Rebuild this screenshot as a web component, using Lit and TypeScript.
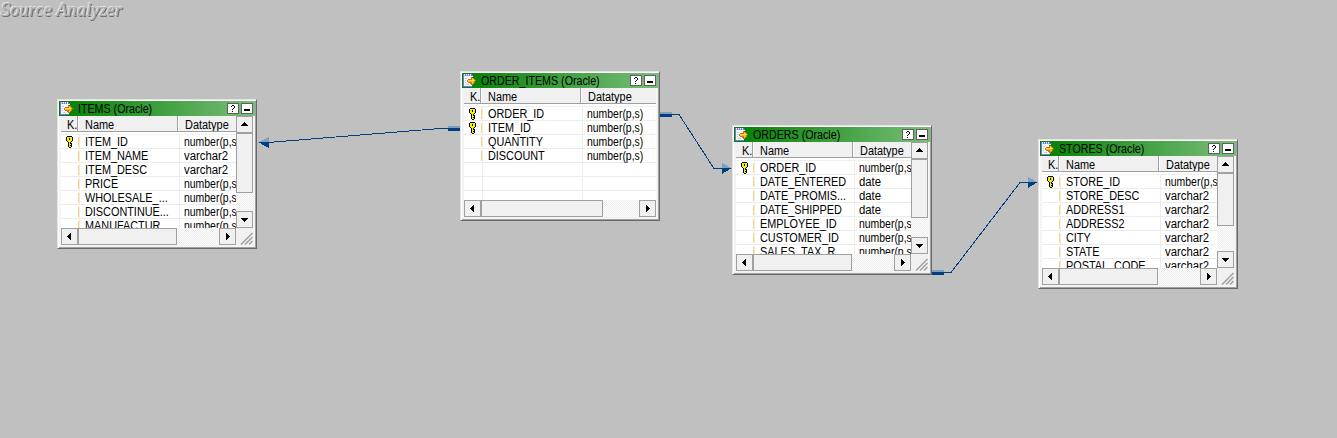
import { LitElement, html, css, svg, nothing } from "lit";
import { customElement, property } from "lit/decorators.js";
import { styleMap } from "lit/directives/style-map.js";

interface Column { name: string; type: string; key?: boolean; }
interface Table { title: string; x: number; y: number; thumb: number; columns: Column[]; }

const num = "number(p,s)";
const vc = "varchar2";

const tables: Table[] = [
  { title: "ITEMS (Oracle)", x: 57, y: 99, thumb: 60, columns: [
    { name: "ITEM_ID", type: num, key: true }, { name: "ITEM_NAME", type: vc }, { name: "ITEM_DESC", type: vc },
    { name: "PRICE", type: num }, { name: "WHOLESALE_...", type: num }, { name: "DISCONTINUE...", type: num },
    { name: "MANUFACTUR...", type: num } ] },
  { title: "ORDER_ITEMS (Oracle)", x: 460, y: 71, thumb: 0, columns: [
    { name: "ORDER_ID", type: num, key: true }, { name: "ITEM_ID", type: num, key: true },
    { name: "QUANTITY", type: num }, { name: "DISCOUNT", type: num },
    { name: "", type: "" }, { name: "", type: "" }, { name: "", type: "" } ] },
  { title: "ORDERS (Oracle)", x: 732, y: 125, thumb: 59, columns: [
    { name: "ORDER_ID", type: num, key: true }, { name: "DATE_ENTERED", type: "date" },
    { name: "DATE_PROMIS...", type: "date" }, { name: "DATE_SHIPPED", type: "date" },
    { name: "EMPLOYEE_ID", type: num }, { name: "CUSTOMER_ID", type: num }, { name: "SALES_TAX_R...", type: num } ] },
  { title: "STORES (Oracle)", x: 1038, y: 139, thumb: 53, columns: [
    { name: "STORE_ID", type: num, key: true }, { name: "STORE_DESC", type: vc }, { name: "ADDRESS1", type: vc },
    { name: "ADDRESS2", type: vc }, { name: "CITY", type: vc }, { name: "STATE", type: vc },
    { name: "POSTAL_CODE", type: vc } ] },
];

const colours: Record<string, string> = {
  k: "#000", y: "#f8f000", w: "#fff", o: "#808000",
  p: "#7474e4", l: "#c4c4f8", f: "#f4f4ff", b: "#c07810", g: "#ffb818", h: "#ffe050",
};

function pixels(rows: string[], name: string) {
  return html`<svg class=${name} width=${rows[0].length} height=${rows.length} shape-rendering="crispEdges">
    ${rows.map((row, y) => [...row].map((c, x) => c === "." ? nothing
      : svg`<rect x=${x} y=${y} width="1" height="1" fill=${colours[c]}></rect>`))}
  </svg>`;
}

const keyIcon = pixels([
  ".kkkkk.", "kyyyyyk", "kyykyyk", "kyykyyk", "kyyyyyk", ".kyyyk.", "..kyk..",
  "..kykk.", "..kyyk.", "..kykk.", "..kyyk.", "...kk..",
], "key");

const sourceIcon = pixels([
  "pfpfpfpfp....",
  "plplplplpp...",
  "pfffffffff...",
  "pfffffffb....",
  "pfllffffbgb..",
  "pffffbbbbhgb.",
  "pflfbhhhhhhgb",
  "pfffbggggggb.",
  "pflffbbbbggb.",
  "pffffffpbgb..",
  "pfflllffbb...",
  "pffffffff....",
  "ppppppppp....",
], "source");

@customElement("source-table")
export class SourceTable extends LitElement {
  @property({ attribute: false }) table!: Table;

  static styles = css`
    :host { display: block; }
    * { box-sizing: border-box; }
    .window {
      width: 200px; height: 150px; padding: 0 1px 1px 1px; background: #f4f4f4; overflow: hidden;
      border: 1px solid; border-color: #e3e3e3 #696969 #696969 #e3e3e3;
      box-shadow: inset 1px 1px #fff, inset -1px -1px #a0a0a0;
      font: 12px/14px "Liberation Sans", Arial, sans-serif; color: #000;
    }
    .bar {
      display: flex; align-items: center; height: 15px; margin-top: 1px; padding: 0 2px 0 1px; gap: 5px;
      background: linear-gradient(90deg, #008000, #7bbd7b);
    }
    .t { display: inline-block; white-space: nowrap; transform-origin: 0 50%; transform: scaleX(.905); }
    .bar .t { flex: 1; width: 0; margin: 1px 0 0; transform: scaleX(.89); }
    .t.number { transform: scaleX(.87); }
    .t.varchar { transform: scaleX(.945); }
    .t.head { transform: scaleX(.91); }
    svg { display: block; flex: none; }
    .btns { display: flex; gap: 2px; }
    .client { display: grid; width: 192px; height: 129px; margin: 0 auto 0 2px; grid-template-columns: 1fr 17px; grid-template-rows: 112px 17px; background: #fff; }
    .client.flat { grid-template-columns: 1fr; }
    .list { overflow: hidden; background: #fff; min-width: 0; }
    .header, .row { display: grid; grid-template-columns: 17px 100px 1fr; }
    .header { height: 16px; background: #f0f0f0; border-bottom: 1px solid #a0a0a0; }
    .header > div { border-right: 1px solid #a0a0a0; box-shadow: 1px 0 #fff; padding: 2px 0 0 7px; height: 15px; overflow: hidden; }
    .header > div:first-child { padding-left: 6px; overflow: visible; }
    .header > div:last-child { border: 0; box-shadow: none; }
    .rows { padding-top: 2px; }
    .rows::before { content: ""; display: block; height: 1px; background: #f0f0f0; }
    .row { height: 14px; border-bottom: 1px solid #ececec; }
    .row > div { height: 14px; padding-left: 6px; }
    .row > div:nth-child(1) { padding: 1px 0 0 5px; }
    .row > div:nth-child(2) {
      padding-left: 7px;
      background: linear-gradient(#ffd07a, #ffd07a) 0 2px / 1px 10px no-repeat, linear-gradient(#ececec, #ececec) 1px 0 / 1px 100% no-repeat;
    }
    .row > div:nth-child(3) { background: linear-gradient(#ececec, #ececec) 1px 0 / 1px 100% no-repeat; }
    .row.empty > div:nth-child(2) { background: linear-gradient(#ececec, #ececec) 1px 0 / 1px 100% no-repeat; }
    .v, .h { display: flex; background: repeating-conic-gradient(#fff 0 25%, #ececec 0 50%) 0 0 / 2px 2px; }
    .v { flex-direction: column; }
    .ab, .thumb { flex: none; background: #f0f0f0; border: 1px solid #a0a0a0; }
    .ab { width: 17px; height: 17px; display: grid; place-items: center; }
    .h .thumb { width: 99px; }
    .flat .h .thumb { width: 122px; }
    .end { margin-left: auto; }
    .v .end { margin: auto 0 0; }
    .grip { background: #f0f0f0; }
  `;

  private arrow(d: string, end = false) {
    return html`<div class="ab ${end ? "end" : ""}"><svg width="9" height="9" shape-rendering="crispEdges"><path d=${d}></path></svg></div>`;
  }

  private kind(type: string) {
    return type === num ? "number" : "varchar";
  }

  render() {
    const t = this.table;
    return html`<div class="window">
      <div class="bar">${sourceIcon}<span class="t">${t.title}</span>
        <div class="btns">
          <svg width="12" height="11" shape-rendering="crispEdges"><rect width="12" height="11" fill="#606060"></rect><rect x="1" y="1" width="10" height="9" fill="#fff"></rect><path d="M4 3h1v1h-1zM5 2h2v1h-2zM7 3h1v2h-1zM6 5h1v1h-1zM5 6h1v1h-1zM5 8h1v1h-1z"></path></svg>
          <svg width="12" height="11" shape-rendering="crispEdges"><rect width="12" height="11" fill="#606060"></rect><rect x="1" y="1" width="10" height="9" fill="#fff"></rect><path d="M3 6h6v2h-6z"></path></svg>
        </div>
      </div>
      <div class="client ${t.thumb ? "" : "flat"}">
        <div class="list">
          <div class="header">
            <div><span class="t head">K.</span></div><div><span class="t head">Name</span></div><div><span class="t head">Datatype</span></div>
          </div>
          <div class="rows">${t.columns.map(c => html`<div class="row ${c.name ? "" : "empty"}">
            <div>${c.key ? keyIcon : nothing}</div>
            <div><span class="t">${c.name}</span></div>
            <div><span class="t ${this.kind(c.type)}">${c.type}</span></div>
          </div>`)}</div>
        </div>
        ${t.thumb ? html`<div class="v">${this.arrow("M4 2h1v1h1v1h1v1h1v1H1V5h1V4h1V3h1z")}
          <div class="thumb" style=${styleMap({ height: `${t.thumb}px` })}></div>
          ${this.arrow("M1 3h7v1h-1v1h-1v1h-1v1h-1v-1h-1v-1h-1v-1h-1z", true)}</div>` : nothing}
        <div class="h">${this.arrow("M6 1v7h-1v-1h-1v-1h-1v-1h-1v-1h1v-1h1v-1h1v-1z")}<div class="thumb"></div>
          ${this.arrow("M3 1v7h1v-1h1v-1h1v-1h1v-1h-1v-1h-1v-1h-1v-1z", true)}</div>
        ${t.thumb ? html`<div class="grip"><svg width="17" height="17"><path d="M5 16.5L16.5 5M9 16.5L16.5 9M13 16.5L16.5 13" stroke="#a0a0a0" stroke-width="1.5"></path></svg></div>` : nothing}
      </div>
    </div>`;
  }
}

@customElement("app-root")
export class AppRoot extends LitElement {
  static styles = css`
    :host { display: block; }
    .canvas { position: relative; height: 438px; overflow: hidden; background: #c0c0c0; }
    .heading {
      font: italic 18.6px/20px "Liberation Serif", "Times New Roman", serif; color: #b0b0b0;
      text-shadow: -1px -1px #e4e4e4, 1px 1px #686868; white-space: nowrap; padding-left: 1px;
    }
    .links { position: absolute; left: 0; top: 0; }
    .node { position: absolute; }
  `;

  render() {
    return html`<div class="canvas">
      <div class="heading">Source Analyzer</div>
      <svg class="links" width="1337" height="438" shape-rendering="crispEdges">
        <g fill="none" stroke="#004080">
          <path d="M268 142.5L440 128.5H449"></path>
          <path d="M671 114.5H679L714 168.5H723"></path>
          <path d="M943 272.5H951L1020 182.5H1029"></path>
        </g>
        <g fill="#7f9fbf">
          <path d="M258 142.5L268.5 137V142.5ZM732 168.5L722 163V168.5ZM1038 182.5L1028 177V182.5Z"></path>
          <path d="M448 126h12v2h-12zM660 112h12v2h-12zM932 270h12v2h-12z"></path>
        </g>
        <g fill="#004080">
          <path d="M258 142L268.5 142V148ZM732 168L722 168V174ZM1038 182L1028 182V188Z"></path>
          <path d="M448 128h12v3h-12zM660 114h12v3h-12zM932 272h12v3h-12z"></path>
        </g>
      </svg>
      ${tables.map(t => html`<source-table class="node" .table=${t} style=${styleMap({ left: `${t.x}px`, top: `${t.y}px` })}></source-table>`)}
    </div>`;
  }
}
